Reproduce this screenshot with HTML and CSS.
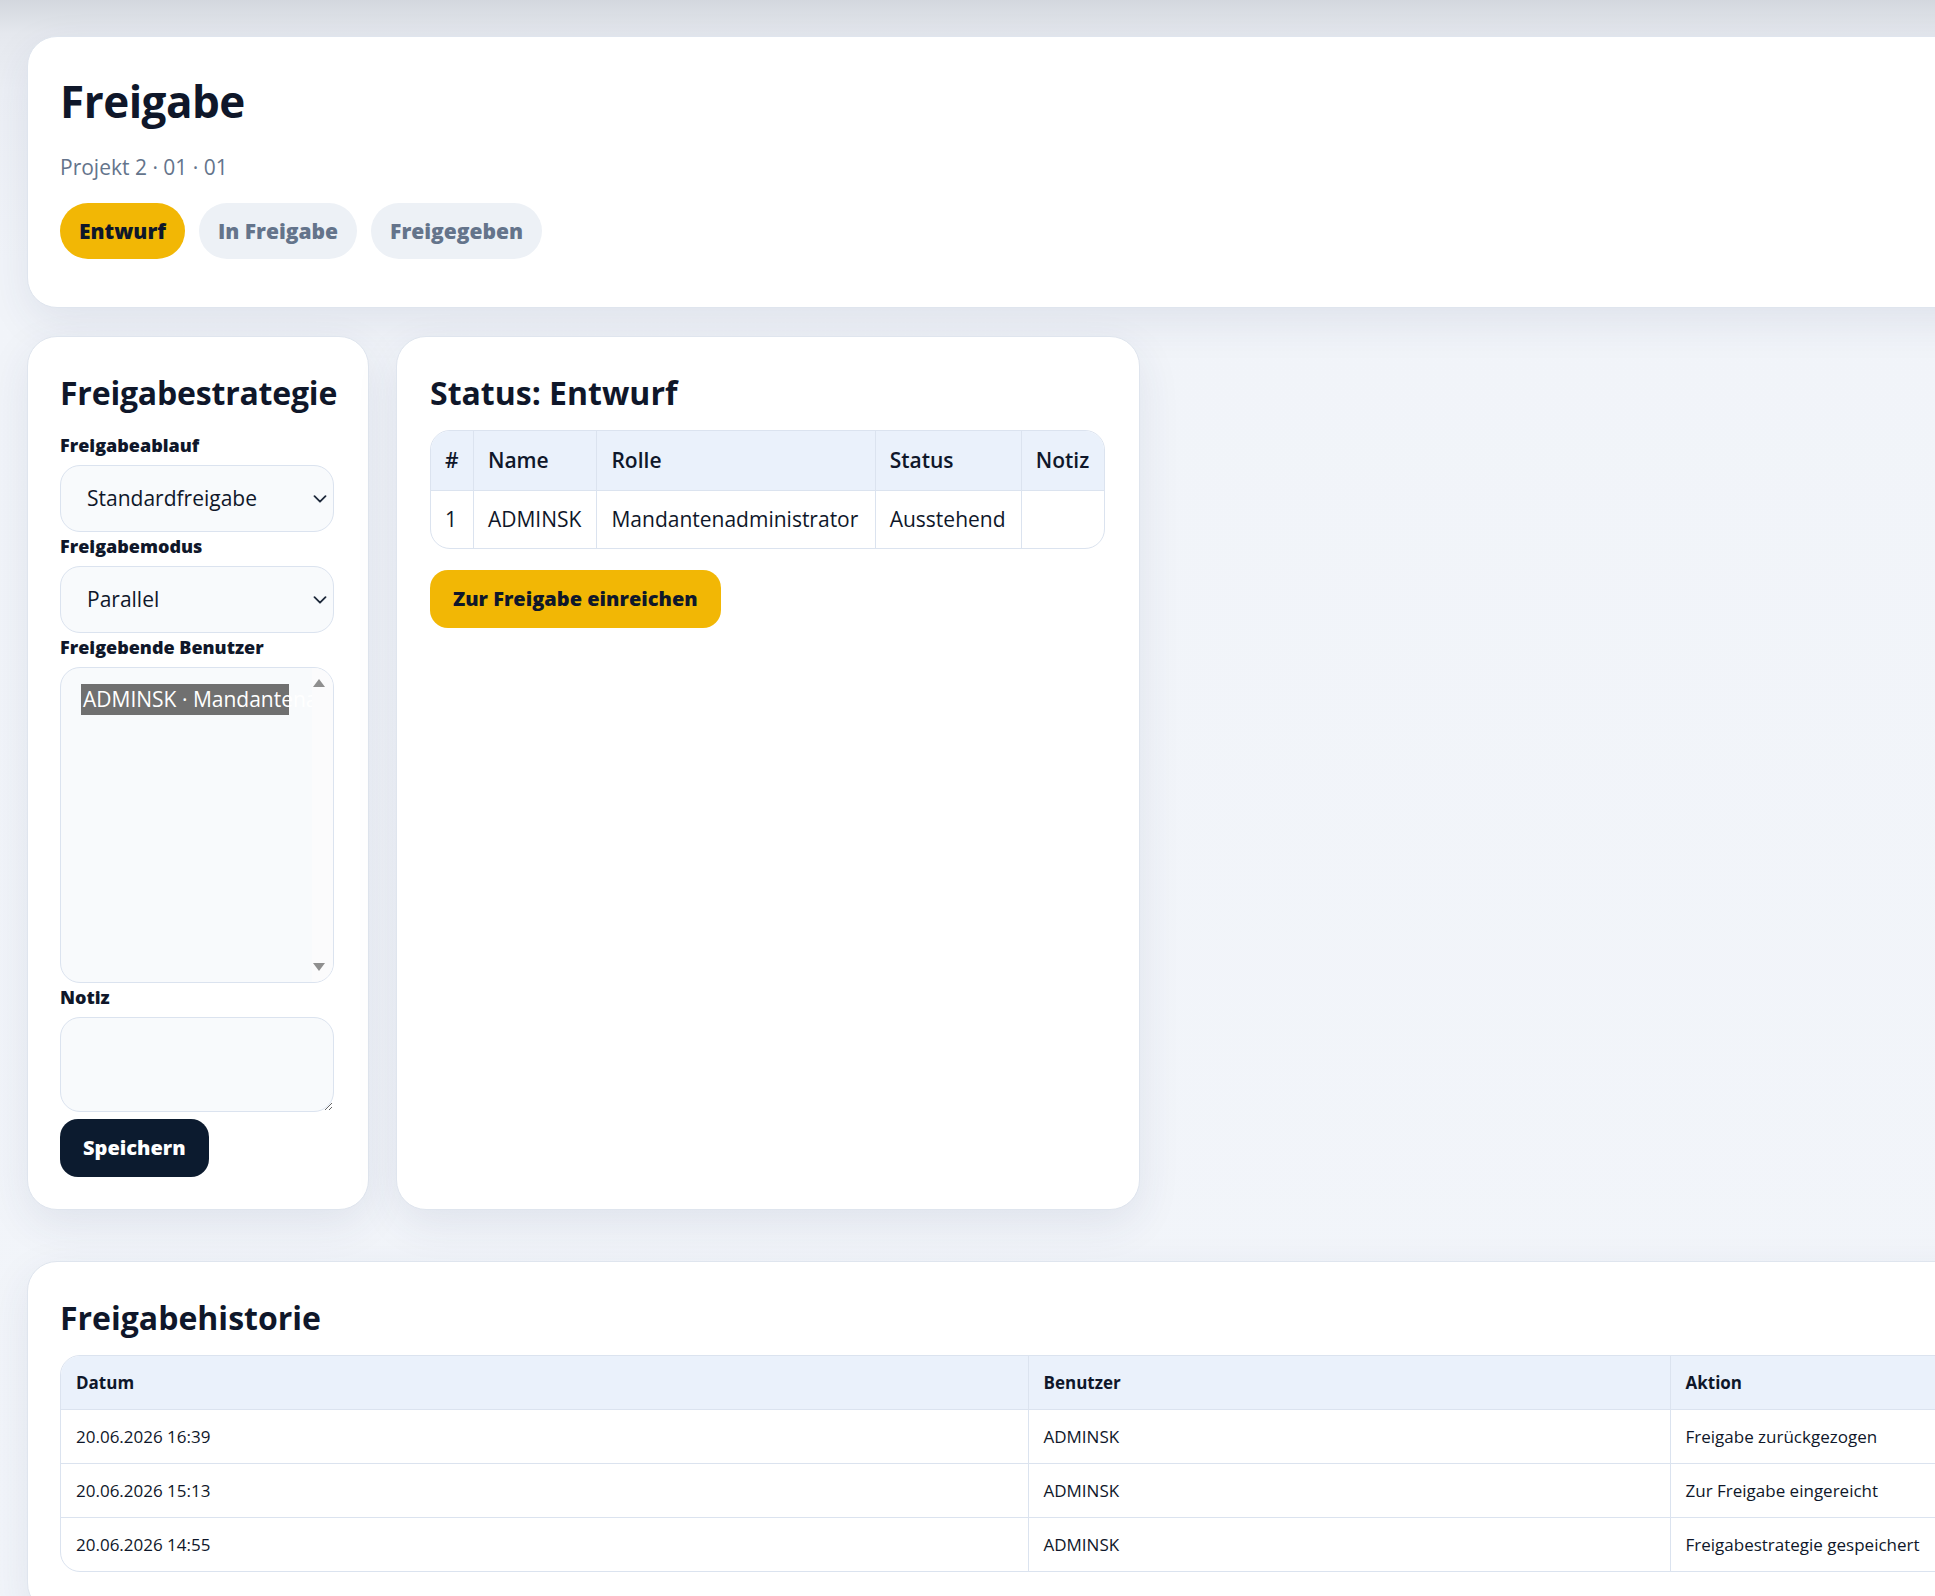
FILE: index.html
```html
<!DOCTYPE html>
<html lang="de">
<head>
<meta charset="utf-8">
<title>Freigabe</title>
<link rel="stylesheet" href="styles.css">
</head>
<body>
<div class="page">
  <section class="card head-card">
    <h1 class="title">Freigabe</h1>
    <div class="subtitle">Projekt 2 · 01 · 01</div>
    <div class="pills">
      <span class="pill pill-active">Entwurf</span>
      <span class="pill">In Freigabe</span>
      <span class="pill">Freigegeben</span>
    </div>
  </section>

  <div class="row">
    <section class="card strategy">
      <h2 class="h2">Freigabestrategie</h2>
      <label class="label">Freigabeablauf</label>
      <div class="select-wrap">
        <select class="select"><option>Standardfreigabe</option></select>
        <svg class="chev" width="14" height="8" viewBox="0 0 14 8"><path d="M1.5 1.2l5.5 5.5 5.5-5.5" fill="none" stroke="#1e293b" stroke-width="1.8" stroke-linecap="round" stroke-linejoin="round"/></svg>
      </div>
      <label class="label">Freigabemodus</label>
      <div class="select-wrap">
        <select class="select"><option>Parallel</option></select>
        <svg class="chev" width="14" height="8" viewBox="0 0 14 8"><path d="M1.5 1.2l5.5 5.5 5.5-5.5" fill="none" stroke="#1e293b" stroke-width="1.8" stroke-linecap="round" stroke-linejoin="round"/></svg>
      </div>
      <label class="label">Freigebende Benutzer</label>
      <div class="multi">
        <div class="opt">ADMINSK · Mandantenadministrator</div>
        <div class="sbar">
          <svg class="arrow-up" width="14" height="10" viewBox="0 0 14 10"><path d="M7 1L13 9H1Z" fill="#8f8f8f"/></svg>
          <svg class="arrow-down" width="14" height="10" viewBox="0 0 14 10"><path d="M1 1H13L7 9Z" fill="#8f8f8f"/></svg>
        </div>
      </div>
      <label class="label">Notiz</label>
      <textarea class="textarea"></textarea>
      <button class="btn btn-dark">Speichern</button>
    </section>

    <section class="card status">
      <h2 class="h2">Status: Entwurf</h2>
      <div class="tbl-wrap">
        <table class="tbl">
          <thead>
            <tr><th>#</th><th>Name</th><th>Rolle</th><th>Status</th><th>Notiz</th></tr>
          </thead>
          <tbody>
            <tr><td>1</td><td>ADMINSK</td><td>Mandantenadministrator</td><td>Ausstehend</td><td></td></tr>
          </tbody>
        </table>
      </div>
      <button class="btn btn-amber">Zur Freigabe einreichen</button>
    </section>
  </div>

  <section class="card history">
    <h2 class="h2">Freigabehistorie</h2>
    <div class="tbl-wrap">
      <table class="tbl hist">
        <colgroup><col class="c1"><col class="c2"><col></colgroup>
        <thead>
          <tr><th>Datum</th><th>Benutzer</th><th>Aktion</th></tr>
        </thead>
        <tbody>
          <tr><td>20.06.2026 16:39</td><td>ADMINSK</td><td>Freigabe zurückgezogen</td></tr>
          <tr><td>20.06.2026 15:13</td><td>ADMINSK</td><td>Zur Freigabe eingereicht</td></tr>
          <tr><td>20.06.2026 14:55</td><td>ADMINSK</td><td>Freigabestrategie gespeichert</td></tr>
        </tbody>
      </table>
    </div>
  </section>
</div>
</body>
</html>
```

FILE: styles.css
```css
html, body {
  margin: 0;
  padding: 0;
  overflow: hidden;
}
body {
  font-family: "Open Sans", "Noto Sans", sans-serif;
  color: #0f172a;
  background: linear-gradient(180deg, #d3d7de 0px, #e5e8ee 34px, #eceff5 90px, #f1f4f9 260px, #f2f5fa 100%);
  min-height: 1596px;
}
.page {
  width: 2300px;
  padding: 36px 27px 60px;
  box-sizing: border-box;
}
.card {
  background: #ffffff;
  border: 1px solid #dfe5ee;
  border-radius: 30px;
  box-shadow: 0 14px 44px rgba(40, 55, 95, 0.09);
  box-sizing: border-box;
}
.head-card {
  padding: 38px 32px 48px;
}
.title {
  margin: 0 0 24px;
  font-size: 44px;
  line-height: 1.2;
  font-weight: 700;
  letter-spacing: -0.5px;
  color: #0f172a;
}
.subtitle {
  font-size: 21px;
  line-height: 31px;
  color: #64748b;
}
.pills {
  display: flex;
  gap: 14px;
  margin-top: 20px;
}
.pill {
  display: inline-block;
  height: 56px;
  line-height: 56px;
  padding: 0 19px;
  border-radius: 28px;
  background: #edf1f6;
  color: #64748b;
  font-size: 21px;
  font-weight: 800;
}
.pill-active {
  background: #f2b705;
  color: #0f172a;
}
.row {
  display: grid;
  grid-template-columns: 342px 744px;
  gap: 27px;
  margin-top: 28px;
  margin-bottom: 51px;
}
.strategy {
  padding: 37px 35px 32px 32px;
  display: flex;
  flex-direction: column;
  align-items: flex-start;
}
.status {
  padding: 37px 34px 32px 33px;
  display: flex;
  flex-direction: column;
  align-items: flex-start;
}
.h2 {
  margin: 0 0 18px;
  font-size: 32px;
  line-height: 38px;
  font-weight: 700;
  color: #0f172a;
}
.strategy .h2 {
  margin-bottom: 19px;
  letter-spacing: -0.2px;
}
.label {
  display: block;
  margin: 3px 0 8px;
  font-size: 18px;
  line-height: 23px;
  font-weight: 800;
  color: #0f172a;
}
.select-wrap {
  position: relative;
  width: 274px;
}
.select {
  appearance: none;
  -webkit-appearance: none;
  display: block;
  width: 274px;
  height: 67px;
  box-sizing: border-box;
  padding: 0 40px 0 26px;
  border: 1px solid #dbe3ef;
  border-radius: 20px;
  background: #f8fafc;
  font-family: inherit;
  font-size: 21px;
  color: #0f172a;
}
.chev {
  position: absolute;
  right: 7px;
  top: 30px;
}
.multi {
  position: relative;
  width: 274px;
  height: 316px;
  box-sizing: border-box;
  border: 1px solid #dbe3ef;
  border-radius: 20px;
  background: #f8fafc;
  padding: 16px 20px;
  overflow: hidden;
}
.opt {
  width: 208px;
  height: 31px;
  line-height: 31px;
  background: #707070;
  color: #ffffff;
  font-size: 21px;
  white-space: nowrap;
  padding-left: 2px;
  box-sizing: border-box;
}
.sbar {
  position: absolute;
  top: 0;
  right: 0;
  bottom: 0;
  width: 21px;
  background: #fbfbfc;
}
.arrow-up {
  position: absolute;
  top: 10px;
  left: 0;
}
.arrow-down {
  position: absolute;
  bottom: 10px;
  left: 0;
}
.textarea {
  display: block;
  width: 274px;
  height: 95px;
  box-sizing: border-box;
  border: 1px solid #dbe3ef;
  border-radius: 20px;
  background: #f8fafc;
  font-family: inherit;
  font-size: 21px;
  padding: 12px 20px;
  margin: 0;
}
.btn {
  display: inline-block;
  height: 58px;
  padding: 0 23px;
  border: 0;
  border-radius: 18px;
  font-family: inherit;
  font-size: 20px;
  font-weight: 800;
  line-height: 58px;
  cursor: pointer;
}
.btn-dark {
  margin-top: 7px;
  background: #0c1b2f;
  color: #ffffff;
}
.btn-amber {
  margin-top: 21px;
  background: #f2b705;
  color: #0f172a;
}
.tbl-wrap {
  width: 100%;
  border: 1px solid #dbe3ef;
  border-radius: 20px;
  overflow: hidden;
  box-sizing: border-box;
}
.tbl {
  width: 100%;
  border-collapse: collapse;
  font-size: 21px;
  line-height: 31px;
}
.tbl th {
  background: #eaf1fb;
  text-align: left;
  font-weight: 600;
  padding: 14px 14px;
  color: #0f172a;
  border-bottom: 1px solid #dbe3ef;
  border-left: 1px solid #dbe3ef;
}
.tbl td {
  padding: 13px 14px;
  border-left: 1px solid #dbe3ef;
  color: #0f172a;
  white-space: nowrap;
}
.tbl th:first-child, .tbl td:first-child {
  border-left: 0;
}
.history {
  padding: 37px 32px 40px;
}
.hist {
  table-layout: fixed;
  font-size: 17px;
  line-height: 25px;
}
.hist .c1 { width: 967px; }
.hist .c2 { width: 642px; }
.hist th {
  padding: 14px 15px;
  font-weight: 700;
}
.hist td {
  padding: 14px 15px;
  border-bottom: 1px solid #dbe3ef;
}
.hist tr:last-child td {
  border-bottom: 0;
}
```
